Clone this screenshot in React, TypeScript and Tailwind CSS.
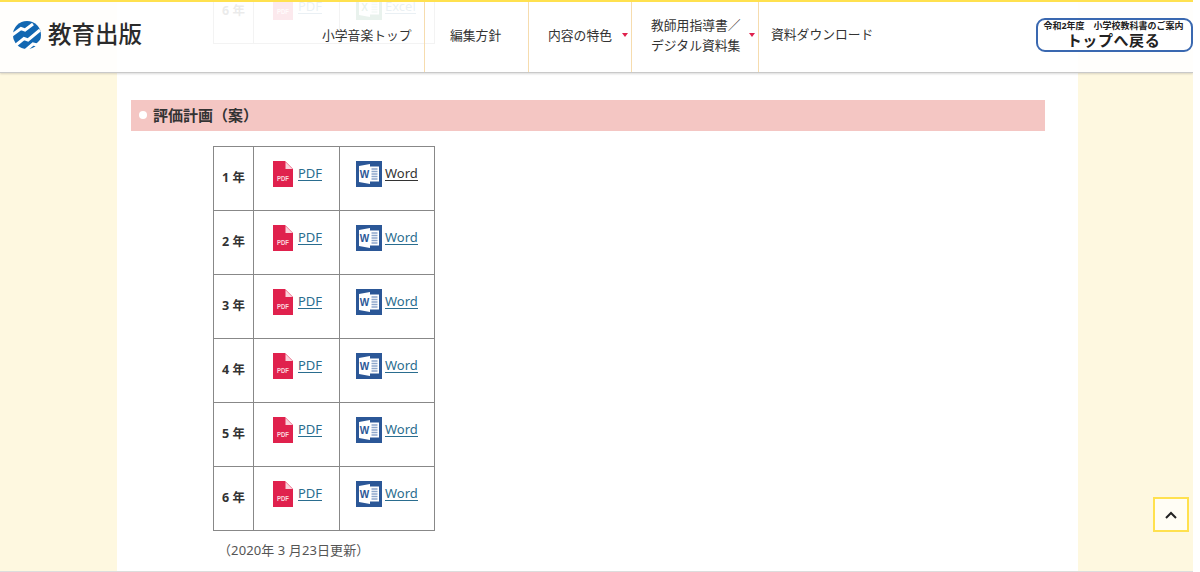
const font = "[font-family:'Noto_Sans','Noto_Sans_CJK_JP',sans-serif]"

function PdfIcon() {
  return (
    <svg width="20" height="26" viewBox="0 0 20 26" className="block shrink-0">
      <path d="M0 0H12L20 8V26H0Z" fill="#e0214d" />
      <path d="M12.5 1L19.5 8H12.5Z" fill="#f9d3dc" />
      <text x="10" y="20" textAnchor="middle" fontSize="7" fontWeight="700" fill="#fbd5de" textLength="12" lengthAdjust="spacingAndGlyphs" fontFamily="'Liberation Sans', sans-serif">PDF</text>
    </svg>
  )
}

function WordIcon() {
  return (
    <svg width="26" height="26" viewBox="0 0 26 26" className="block shrink-0">
      <rect width="26" height="26" fill="#2b5797" />
      <path d="M3 5L14 3V23L3 21Z" fill="#fff" />
      <rect x="14" y="5.5" width="9" height="15" fill="#fff" />
      <path d="M15.5 8H21.5M15.5 10.5H21.5M15.5 13H21.5M15.5 15.5H21.5M15.5 18H21.5" stroke="#8ea7cb" strokeWidth="1.3" />
      <text x="8.5" y="17" textAnchor="middle" fontSize="10" fontWeight="700" fill="#2b5797" fontFamily="'Liberation Sans', sans-serif">W</text>
    </svg>
  )
}

function ExcelIcon() {
  return (
    <svg width="26" height="26" viewBox="0 0 26 26" className="block shrink-0">
      <rect width="26" height="26" fill="#1f7a4c" />
      <path d="M3 5L14 3V23L3 21Z" fill="#fff" />
      <rect x="14" y="5.5" width="9" height="15" fill="#fff" />
      <path d="M15.5 8H21.5M15.5 10.5H21.5M15.5 13H21.5M15.5 15.5H21.5M15.5 18H21.5" stroke="#8fbfa5" strokeWidth="1.3" />
      <text x="8.5" y="17" textAnchor="middle" fontSize="10" fontWeight="700" fill="#1f7a4c" fontFamily="'Liberation Sans', sans-serif">X</text>
    </svg>
  )
}

function Logo() {
  return (
    <svg width="28" height="28" viewBox="0 0 28 28" className="block shrink-0">
      <circle cx="14" cy="14" r="14" fill="#1267b2" />
      <path d="M-1 14L8 7.5L12 9L20 3M3 24L11 17.5L15 19L27 9M13 29L20 23L24 24L30 18" fill="none" stroke="#fff" strokeWidth="3" />
    </svg>
  )
}

function Row({ label, second = "Word", darkFirst = false }: { label: string; second?: string; darkFirst?: boolean }) {
  return (
    <tr className="h-[64px]">
      <th className="w-[40px] border border-[#888] p-0 pb-px text-center text-[12.5px] font-bold text-[#333]">{label}</th>
      <td className="w-[86px] border border-[#888] p-0 align-top">
        <div className="flex pl-[19px] pt-[14px]">
          <PdfIcon />
          <a className="ml-[5px] mt-[3px] h-[17px] border-b border-[#2a6d8f] pt-px text-[13px] leading-[16px] text-[#2a6d8f]">{"PDF"}</a>
        </div>
      </td>
      <td className="w-[95px] border border-[#888] p-0 align-top">
        <div className="flex pl-[16px] pt-[14px]">
          {second === "Word" ? <WordIcon /> : <ExcelIcon />}
          <a className={`ml-[3px] mt-[3px] h-[17px] border-b pt-px text-[13px] leading-[16px] ${darkFirst ? "border-[#333] text-[#333]" : "border-[#2a6d8f] text-[#2a6d8f]"}`}>{second}</a>
        </div>
      </td>
    </tr>
  )
}

function NavItem({ children, className = "", arrow = false }: { children: React.ReactNode; className?: string; arrow?: boolean }) {
  return (
    <div className={`relative flex h-full items-center border-r border-[#f6dcae] pb-[4px] text-[12.8px] leading-[20px] text-[#333] ${className}`}>
      {children}
      {arrow && <span className="absolute right-[3px] top-[31px] h-0 w-0 border-x-[3px] border-t-[4px] border-x-transparent border-t-[#e0214d]" />}
    </div>
  )
}

export default function App() {
  return (
    <div className={`h-[572px] w-full overflow-hidden bg-white ${font}`}>
      <div className="relative h-[572px] w-[1193px] overflow-hidden border-b border-[#ddd] bg-[#fef8e0]">
        <header className="absolute left-0 top-0 z-10 flex h-[73px] w-full items-center border-t-2 border-b border-t-[#ffe14f] border-b-[#c9c9c9] bg-white/90 shadow-[0_1px_2px_rgba(0,0,0,0.15)]">
          <div className="mb-[4px] ml-[13px] flex w-[296px] items-center gap-[7px]">
            <Logo />
            <span className="text-[23.5px] font-medium leading-none text-[#2b2b2b]">教育出版</span>
          </div>
          <nav className="flex h-full">
            <NavItem className="w-[116px] pl-[13px]">小学音楽トップ</NavItem>
            <NavItem className="w-[104px] pl-[25px]">編集方針</NavItem>
            <NavItem className="w-[103px] pl-[19px]" arrow>内容の特色</NavItem>
            <NavItem className="w-[127px] pl-[19px]" arrow>
              <span>教師用指導書／<br />デジタル資料集</span>
            </NavItem>
            <div className="flex h-full items-center pb-[4px] pl-[12px] text-[12.8px] text-[#333]">資料ダウンロード</div>
          </nav>
          <a className="absolute left-[1036px] top-[16px] flex h-[34px] w-[157px] flex-col items-center justify-center rounded-[9px] border-2 border-[#3a68b0] bg-white/90 pb-[2px] pr-[2px] text-[#222]">
            <span className="text-[9px] font-bold leading-[12px]">令和2年度　小学校教科書のご案内</span>
            <span className="text-[15px] font-bold leading-[16px] tracking-[0.6px]">トップへ戻る</span>
          </a>
        </header>

        <main className="ml-[117px] h-[593px] w-[961px] bg-white pl-[14px] pt-px">
          <div className="-mt-[22px] ml-[82px]">
            <table className="border-collapse">
              <tbody>
                <Row label="6 年" second="Excel" />
              </tbody>
            </table>
          </div>

          <h2 className="mt-[56px] flex h-[31px] w-[914px] items-center bg-[#f4c6c3] pb-px pl-[8px] text-[15px] font-bold text-[#333]">
            <span className="mr-[6px] h-[8px] w-[8px] rounded-full bg-white" />
            評価計画（案）
          </h2>

          <div className="ml-[82px] mt-[15px]">
            <table className="border-collapse">
              <tbody>
                <Row label="1 年" darkFirst />
                <Row label="2 年" />
                <Row label="3 年" />
                <Row label="4 年" />
                <Row label="5 年" />
                <Row label="6 年" />
              </tbody>
            </table>
            <p className="ml-[5px] mt-[9px] text-[13px] leading-[20px] tracking-[0.1px] text-[#555]">（2020年 3 月23日更新）</p>
          </div>
        </main>

        <button className="absolute left-[1153px] top-[497px] flex h-[35px] w-[36px] items-center justify-center border-2 border-[#ffe14f] bg-[#fffdf5]">
          <svg width="12" height="8" viewBox="0 0 12 8"><path d="M1 7L6 2L11 7" fill="none" stroke="#222" strokeWidth="2" /></svg>
        </button>
      </div>
    </div>
  )
}
